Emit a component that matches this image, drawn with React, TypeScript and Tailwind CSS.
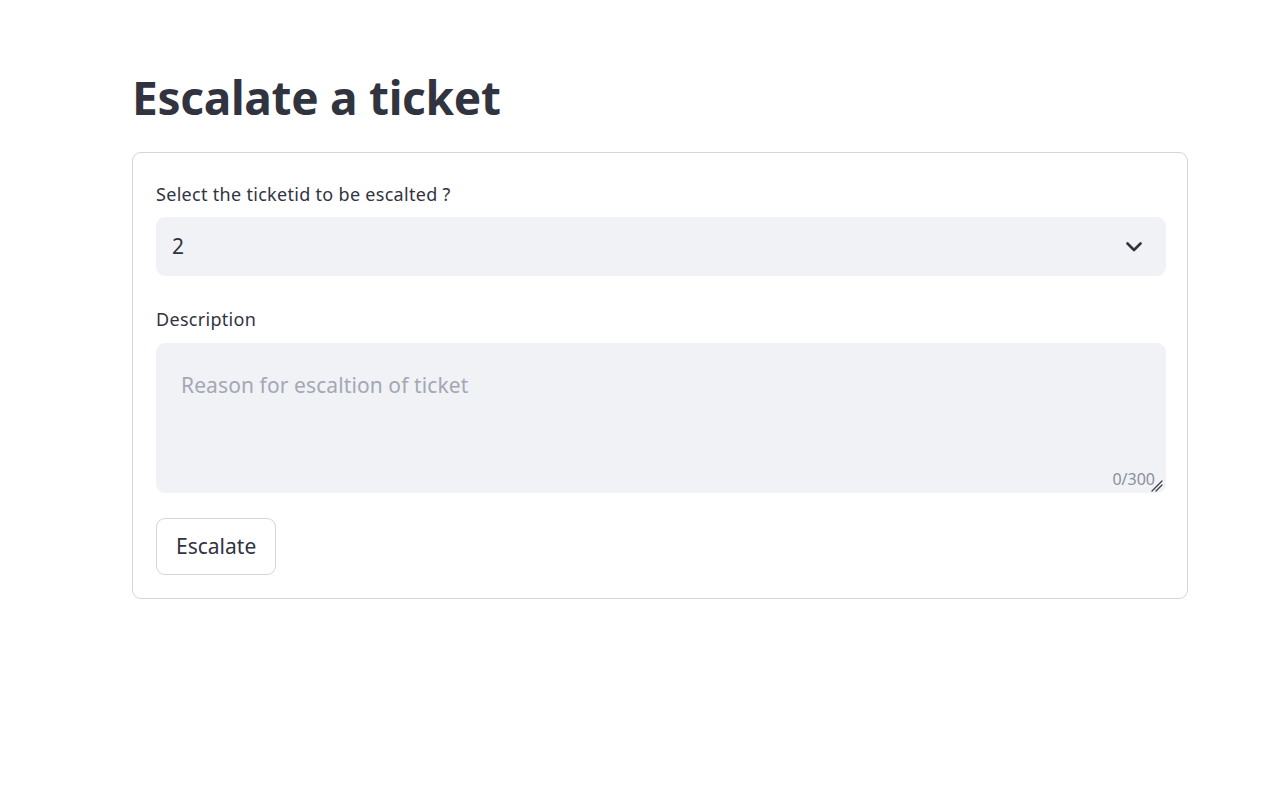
export default function App() {
  return (
    <div
      className="min-h-screen bg-white text-[#31333f]"
      style={{ fontFamily: '"Noto Sans", "Open Sans", sans-serif' }}
    >
      <div className="pl-[132px] pt-[62px] w-[1188px]">
        <h1 className="text-[46px] font-bold leading-[70px] tracking-[-0.3px]">Escalate a ticket</h1>

        <div className="mt-[20px] border border-[#d6d6d9] rounded-[9px] pl-[23px] pr-[21px] pt-[29px] pb-[23px]">
          {/* Select */}
          <label className="block text-[18px] leading-[24px] mb-[11px] tracking-[0.3px]">Select the ticketid to be escalted ?</label>
          <div className="h-[59px] bg-[#f0f2f6] rounded-[9px] flex items-center justify-between pl-[16px] pr-[24px]">
            <span className="text-[21px]">2</span>
            <svg width="16" height="10" viewBox="0 0 16 10" className="mt-[1px]">
              <path d="M1.5 1.5 L8 8 L14.5 1.5" fill="none" stroke="#31333f" strokeWidth="2.6" strokeLinecap="round" strokeLinejoin="round" />
            </svg>
          </div>

          {/* Description */}
          <label className="block text-[18px] leading-[24px] mt-[31px] mb-[12px] tracking-[0.3px]">Description</label>
          <div className="relative h-[150px] bg-[#f0f2f6] rounded-[9px]">
            <div className="pl-[25px] pt-[28px] text-[21px] leading-[28px] text-[#a3a8b4] tracking-[0.1px]">Reason for escaltion of ticket</div>
            <span className="absolute right-[11px] bottom-[2px] text-[16px] text-[#8b8f9c]">0/300</span>
            <svg className="absolute right-[3px] bottom-[1px]" width="12" height="12" viewBox="0 0 12 12">
              <path d="M11 1 L1 11 M11 5 L5 11" stroke="#3d3f4a" strokeWidth="1.3" strokeLinecap="round" />
            </svg>
          </div>

          {/* Button */}
          <button className="mt-[25px] h-[57px] px-[19px] bg-white border border-[#d6d6d9] rounded-[9px] text-[21px]">
            Escalate
          </button>
        </div>
      </div>
    </div>
  );
}
